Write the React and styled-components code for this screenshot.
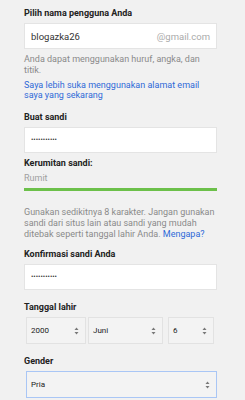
import React from 'react'
import styled, { createGlobalStyle } from 'styled-components'

const Global = createGlobalStyle`
  html, body { margin: 0; padding: 0; background: #f1f1f1; }
  body { font-family: Roboto, Arial, sans-serif; }
`

const Page = styled.div`
  width: 245px;
  height: 400px;
  overflow: hidden;
  background: #f1f1f1;
  padding: 7px 28px 0 24px;
  box-sizing: border-box;
`

const Field = styled.div`
  display: flex;
  flex-direction: column;
  margin-bottom: ${p => p.gap || 0}px;
`

const Label = styled.label`
  font-size: 9px;
  line-height: 12px;
  font-weight: 700;
  color: #222;
  margin-top: ${p => p.mt || 0}px;
  margin-bottom: ${p => p.mb ?? 4}px;
`

const InputBox = styled.div`
  display: flex;
  align-items: center;
  height: 26px;
  box-sizing: border-box;
  background: #fff;
  border: 1px solid #e4e4e4;
  padding: 0 6px;
`

const TextInput = styled.input`
  flex: 1;
  min-width: 0;
  border: 0;
  outline: none;
  padding: 0;
  background: transparent;
  font-family: Roboto, Arial, sans-serif;
  font-size: ${p => (p.type === 'password' ? '7px' : '9.5px')};
  color: #333;
`

const Suffix = styled.span`
  font-size: 9.5px;
  color: #aaa;
`

const Help = styled.p`
  margin: ${p => p.mt ?? 5}px 0 0;
  font-size: 9px;
  line-height: 11px;
  color: #8a8a8a;
`

const Link = styled.a`
  color: #2f6ad8;
  text-decoration: none;
`

const LinkBlock = styled.p`
  margin: 4px 0 0;
  font-size: 9px;
  line-height: 10px;
  color: #2f6ad8;
`

const Strength = styled.div`
  font-size: 9px;
  line-height: 11px;
  color: #a0a0a0;
  margin-top: 4px;
`

const Bar = styled.div`
  height: 3px;
  background: #6cc04a;
  margin-top: 4px;
`

const SelectRow = styled.div`
  display: flex;
  gap: 2px;
  padding-left: 2px;
`

const SelectWrap = styled.div`
  position: relative;
  width: ${p => p.w}px;
  height: 27px;
  box-sizing: border-box;
  border: 1px solid ${p => (p.focus ? '#a9c6f5' : '#e2e2e2')};
  background: #f3f3f3;
  margin-left: ${p => p.ml || 0}px;
`

const Select = styled.select`
  appearance: none;
  -webkit-appearance: none;
  width: 100%;
  height: 100%;
  border: 0;
  outline: none;
  background: transparent;
  padding: 0 0 0 4px;
  font-family: Roboto, Arial, sans-serif;
  font-size: 8px;
  color: #222;
`

const Arrows = styled.svg`
  position: absolute;
  right: 6px;
  top: 50%;
  margin-top: -4px;
  pointer-events: none;
`

function Updown() {
  return (
    <Arrows width="5" height="8" viewBox="0 0 5 8">
      <path d="M2.5 0.5 L4.5 3 L0.5 3 Z" fill="#777" />
      <path d="M2.5 7.5 L4.5 5 L0.5 5 Z" fill="#777" />
    </Arrows>
  )
}

function Dropdown({ w, ml, focus, value, options }) {
  return (
    <SelectWrap w={w} ml={ml} focus={focus}>
      <Select defaultValue={value}>
        {options.map(o => (
          <option key={o}>{o}</option>
        ))}
      </Select>
      <Updown />
    </SelectWrap>
  )
}

export default function App() {
  return (
    <>
      <Global />
      <Page>
        <Field gap={11}>
          <Label>Pilih nama pengguna Anda</Label>
          <InputBox>
            <TextInput defaultValue="blogazka26" />
            <Suffix>@gmail.com</Suffix>
          </InputBox>
          <Help>Anda dapat menggunakan huruf, angka, dan titik.</Help>
          <LinkBlock>Saya lebih suka menggunakan alamat email saya yang sekarang</LinkBlock>
        </Field>

        <Field gap={8}>
          <Label>Buat sandi</Label>
          <InputBox>
            <TextInput type="password" defaultValue="12345678901" />
          </InputBox>
          <Label mt={4} mb={0}>Kerumitan sandi:</Label>
          <Strength>Rumit</Strength>
          <Bar />
          <Help mt={16}>
            Gunakan sedikitnya 8 karakter. Jangan gunakan sandi dari situs lain atau sandi yang mudah
            ditebak seperti tanggal lahir Anda. <Link href="#">Mengapa?</Link>
          </Help>
        </Field>

        <Field gap={11}>
          <Label>Konfirmasi sandi Anda</Label>
          <InputBox>
            <TextInput type="password" defaultValue="12345678901" />
          </InputBox>
        </Field>

        <Field gap={11}>
          <Label>Tanggal lahir</Label>
          <SelectRow>
            <Dropdown w={60} value="2000" options={['1999', '2000', '2001']} />
            <Dropdown w={75} value="Juni" options={['Mei', 'Juni', 'Juli']} />
            <Dropdown w={46} ml={3} value="6" options={['5', '6', '7']} />
          </SelectRow>
        </Field>

        <Field>
          <Label>Gender</Label>
          <SelectRow>
            <Dropdown w={193} focus value="Pria" options={['Pria', 'Wanita']} />
          </SelectRow>
        </Field>
      </Page>
    </>
  )
}
